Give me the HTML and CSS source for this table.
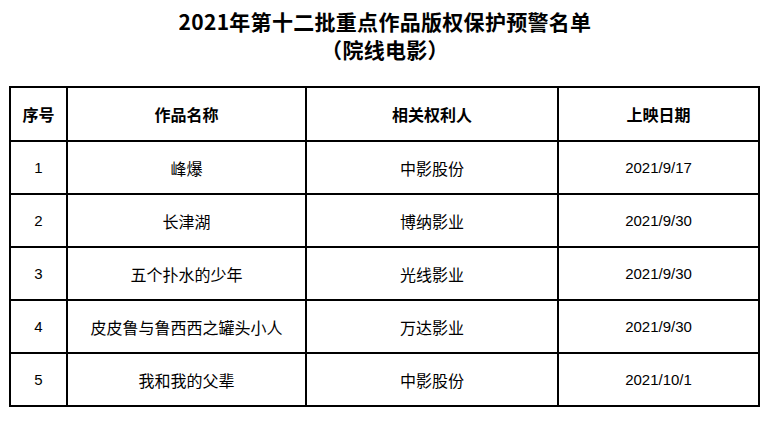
FILE: index.html
```html
<!DOCTYPE html>
<html lang="zh-CN">
<head>
<meta charset="utf-8">
<title>2021年第十二批重点作品版权保护预警名单</title>
<link rel="stylesheet" href="styles.css">
</head>
<body>
<div class="page">
  <h1 class="title">
    <span class="line">2021年第十二批重点作品版权保护预警名单</span>
    <span class="line">（院线电影）</span>
  </h1>
  <div class="grid">
    <div class="cell head">序号</div>
    <div class="cell head">作品名称</div>
    <div class="cell head">相关权利人</div>
    <div class="cell head">上映日期</div>

    <div class="cell num">1</div>
    <div class="cell">峰爆</div>
    <div class="cell">中影股份</div>
    <div class="cell num">2021/9/17</div>

    <div class="cell num">2</div>
    <div class="cell">长津湖</div>
    <div class="cell">博纳影业</div>
    <div class="cell num">2021/9/30</div>

    <div class="cell num">3</div>
    <div class="cell">五个扑水的少年</div>
    <div class="cell">光线影业</div>
    <div class="cell num">2021/9/30</div>

    <div class="cell num">4</div>
    <div class="cell">皮皮鲁与鲁西西之罐头小人</div>
    <div class="cell">万达影业</div>
    <div class="cell num">2021/9/30</div>

    <div class="cell num">5</div>
    <div class="cell">我和我的父辈</div>
    <div class="cell">中影股份</div>
    <div class="cell num">2021/10/1</div>
  </div>
</div>
</body>
</html>
```

FILE: styles.css
```css
html, body {
  margin: 0;
  padding: 0;
  background: #ffffff;
}

.page {
  width: 770px;
  height: 422px;
  font-family: "Noto Sans CJK SC", "Liberation Sans", sans-serif;
  color: #000000;
}

.title {
  margin: 0;
  padding-top: 7px;
  display: flex;
  flex-direction: column;
  align-items: center;
  font-size: 21px;
  font-weight: bold;
  letter-spacing: 0.3px;
}

.title .line {
  display: block;
  height: 28px;
  line-height: 28px;
  overflow: hidden;
}

.grid {
  margin: 23px 0 0 9px;
  width: 751px;
  box-sizing: border-box;
  display: grid;
  grid-template-columns: 55px 237px 250px 199px;
  grid-template-rows: 52px repeat(5, 51px);
  gap: 2px;
  padding: 2px;
  background: #000000;
}

.cell {
  background: #ffffff;
  display: flex;
  align-items: center;
  justify-content: center;
  font-size: 16px;
  font-weight: normal;
}

.head {
  font-weight: bold;
}

.num {
  font-family: "Liberation Sans", sans-serif;
  font-size: 15px;
}
```
